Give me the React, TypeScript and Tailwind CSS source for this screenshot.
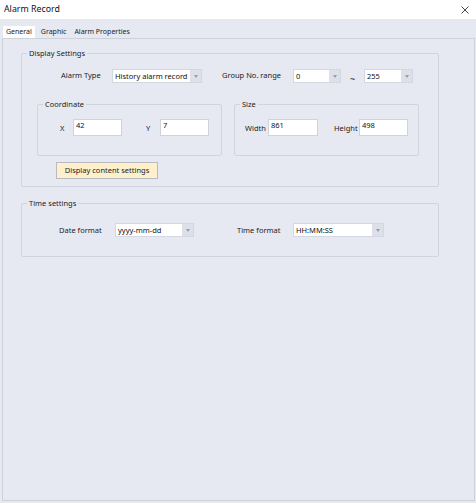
import React from "react";

const F = { fontFamily: '"Noto Sans", "Liberation Sans", sans-serif' };

function Select({ value, w }: { value: string; w: string }) {
  return (
    <div className={`flex h-[14px] ${w} border border-[#d3d7e1] bg-white`}>
      <div className="flex-1 pl-[2px] text-[7.5px] leading-[12px] text-[#111]">{value}</div>
      <div className="w-[11px] bg-[#dde0e8] flex items-center justify-center">
        <svg width="4" height="3" viewBox="0 0 4 3">
          <path d="M0 0 L4 0 L2 3 Z" fill="#9a9ea8" />
        </svg>
      </div>
    </div>
  );
}

function Input({ value, w }: { value: string; w: string }) {
  return (
    <div className={`h-[17px] ${w} border border-[#cfd3dd] bg-white pl-[2px] text-[7.5px] leading-[11px] text-[#111]`}>
      {value}
    </div>
  );
}

function Group({
  title,
  className,
  children,
}: {
  title: string;
  className: string;
  children?: React.ReactNode;
}) {
  return (
    <div className={`relative border border-[#d0d4de] rounded-[2px] ${className}`}>
      <span className="absolute -top-[6px] left-[5px] px-[2px] bg-[#e6e9f2] text-[7.5px] leading-[10px] text-[#222]">
        {title}
      </span>
      {children}
    </div>
  );
}

export default function App() {
  return (
    <div style={F} className="w-[476px] h-[503px] bg-[#e6e9f2] flex flex-col text-[#222] overflow-hidden">
      <div className="h-[19px] bg-white flex items-center justify-between pl-[4px] pr-[7px]">
        <span className="text-[8.8px] text-[#111]">Alarm Record</span>
        <svg width="8" height="8" viewBox="0 0 8 8">
          <path d="M0.5 0.5 L7.5 7.5 M7.5 0.5 L0.5 7.5" stroke="#333" strokeWidth="0.9" />
        </svg>
      </div>
      <div className="h-[19px] flex items-end pl-[3px]">
        <div className="h-[12px] px-[3px] bg-white text-[7px] leading-[12px]">General</div>
        <div className="h-[12px] px-[4px] ml-[2px] text-[7px] leading-[12px]">Graphic</div>
        <div className="h-[12px] px-[4px] text-[7px] leading-[12px]">Alarm Properties</div>
      </div>
      <div className="ml-[2px] w-[473px] h-[463px] border border-[#cdd1dc] flex flex-col">
        <Group title="Display Settings" className="mt-[14px] ml-[18px] w-[418px] h-[134px] flex flex-col">
          <div className="flex items-center mt-[14px] pl-[39px] text-[7.5px]">
            <span className="w-[51px]">Alarm Type</span>
            <Select value="History alarm record" w="w-[90px]" />
            <span className="ml-[20px] w-[71px]">Group No. range</span>
            <Select value="0" w="w-[48px]" />
            <span className="ml-[9px] w-[14px] pt-[6px] text-[9px] leading-[10px]">~</span>
            <Select value="255" w="w-[49px]" />
          </div>
          <div className="flex mt-[20px] pl-[15px] gap-[12px]">
            <Group title="Coordinate" className="w-[185px] h-[52px] flex items-start pt-[14px] text-[7.5px]">
              <span className="ml-[22px] w-[13px] mt-[4px]">X</span>
              <Input value="42" w="w-[49px]" />
              <span className="ml-[24px] w-[14px] mt-[4px]">Y</span>
              <Input value="7" w="w-[49px]" />
            </Group>
            <Group title="Size" className="w-[185px] h-[52px] flex items-start pt-[14px] text-[7.5px]">
              <span className="ml-[10px] w-[23px] mt-[4px]">Width</span>
              <Input value="861" w="w-[50px]" />
              <span className="ml-[16px] w-[25px] mt-[4px]">Height</span>
              <Input value="498" w="w-[49px]" />
            </Group>
          </div>
          <div className="mt-[6px] ml-[34px] w-[102px] h-[17px] bg-[#fdf0cb] border border-[#b8bbc2] text-[7.5px] leading-[15px] text-center text-[#222]">
            Display content settings
          </div>
        </Group>
        <Group title="Time settings" className="mt-[16px] ml-[18px] w-[418px] h-[54px] flex items-center text-[7.5px]">
          <span className="ml-[37px] w-[56px] mt-[1px]">Date format</span>
          <Select value="yyyy-mm-dd" w="w-[79px]" />
          <span className="ml-[43px] w-[56px] mt-[1px]">Time format</span>
          <Select value="HH:MM:SS" w="w-[91px]" />
        </Group>
      </div>
    </div>
  );
}
